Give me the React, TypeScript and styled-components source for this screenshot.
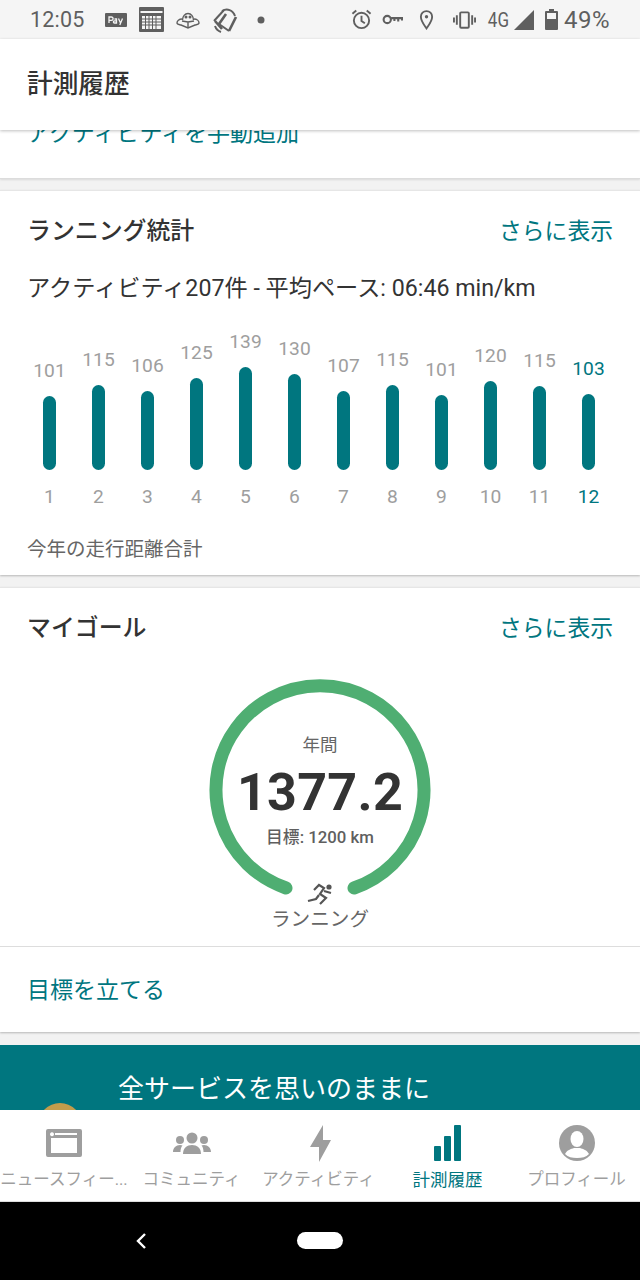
import React from "react";
import styled, { createGlobalStyle } from "styled-components";

const Global = createGlobalStyle`
  html, body { margin: 0; padding: 0; background: #f2f2f2; }
  * { box-sizing: border-box; }
  body { font-family: Roboto, "Noto Sans CJK JP", sans-serif; }
`;
const TEAL = "#00767f";
const Screen = styled.div`width:640px;height:1280px;display:flex;flex-direction:column;overflow:hidden;background:#f2f2f2;`;
const StatusBar = styled.div`height:39px;flex:none;background:#f5f5f5;display:flex;align-items:center;padding:0 30px;color:#5f5f5f;`;
const Time = styled.span`font-size:21.5px;letter-spacing:.2px;width:75px;`;
const StatusLeft = styled.div`display:flex;align-items:center;gap:12px;`;
const StatusDot = styled.svg`margin-left:7px;`;
const StatusRight = styled.div`display:flex;align-items:center;margin-left:auto;`;
const StatusGlyph = styled.svg<{ $gap: number }>`margin-left:${p => p.$gap}px;flex:none;`;
const NetLabel = styled.span`font-size:20px;transform:scaleX(.85);margin:0 3px 0 10px;`;
const Percent = styled.span`font-size:24px;letter-spacing:.5px;margin-left:6px;`;
const Header = styled.header`height:91px;flex:none;background:#fff;display:flex;align-items:center;padding:0 27px 7px;font-size:25.7px;font-weight:500;color:#333;position:relative;z-index:2;box-shadow:0 1px 3px rgba(0,0,0,.25);`;
const Scroll = styled.main`flex:1;min-height:0;overflow:hidden;position:relative;display:flex;flex-direction:column;`;
const ClippedCard = styled.div`height:49px;flex:none;background:#fff;overflow:hidden;display:flex;align-items:flex-end;padding:0 27px 28px;border-bottom:1px solid #dcdcdc;box-shadow:0 1px 2px rgba(0,0,0,.1);`;
const Link = styled.span`font-size:23px;color:${TEAL};line-height:32px;white-space:nowrap;`;
const Card = styled.section<{ $top: number }>`flex:none;background:#fff;margin-top:${p => p.$top}px;box-shadow:0 1px 2px rgba(0,0,0,.25);border-top:1px solid #e6e6e6;`;
const CardHead = styled.div`display:flex;justify-content:space-between;align-items:center;padding:18px 27px 0 27px;height:62px;`;
const CardTitle = styled.h2`margin:0;font-size:23.9px;font-weight:500;color:#333;line-height:34px;`;
const More = styled.span`font-size:22.8px;color:${TEAL};line-height:34px;padding-top:2px;`;
const Summary = styled.p`margin:19px 0 0;padding:0 27px;font-size:23.2px;line-height:32px;color:#333;white-space:nowrap;`;
const Chart = styled.div`display:grid;grid-template-columns:repeat(12,49px);padding:0 25px;margin-top:16px;`;
const Col = styled.div`display:flex;flex-direction:column;align-items:center;`;
const BarArea = styled.div`height:150px;display:flex;flex-direction:column;justify-content:flex-end;align-items:center;width:100%;`;
const Value = styled.span<{ $on: boolean }>`font-size:19.2px;line-height:24px;margin-bottom:13px;color:${p => (p.$on ? TEAL : "#9e9e9e")};`;
const Bar = styled.div<{ $h: number }>`width:13px;height:${p => p.$h}px;border-radius:7px;background:${TEAL};`;
const Month = styled.span<{ $on: boolean }>`font-size:19.2px;line-height:24px;margin-top:15px;color:${p => (p.$on ? TEAL : "#9e9e9e")};`;
const Caption = styled.p`margin:27px 0 0;padding:0 27px 11px;font-size:19.5px;line-height:28px;color:#666;`;
const Gauge = styled.div`margin:20px auto 0;width:240px;height:276px;position:relative;display:flex;flex-direction:column;align-items:center;`;
const GaugeRing = styled.svg`position:absolute;left:0;top:0;`;
const Period = styled.span`font-size:17.5px;color:#666;margin-top:62px;line-height:26px;z-index:1;`;
const Big = styled.span`font-size:52px;font-weight:700;color:#333;line-height:60px;letter-spacing:.3px;z-index:1;margin-top:5px;`;
const Goal = styled.span`font-size:16.8px;font-weight:500;color:#5f5f5f;line-height:24px;z-index:1;margin-top:2px;`;
const RunIcon = styled.svg`position:absolute;left:106px;top:212px;`;
const Sport = styled.span`position:absolute;top:236px;left:0;right:0;text-align:center;font-size:19.6px;color:#666;line-height:28px;`;
const Footer = styled.div`border-top:1px solid #ddd;height:86px;display:flex;align-items:center;padding:2px 27px 0;`;
const Promo = styled.div`margin-top:13px;flex:1;background:${TEAL};position:relative;overflow:hidden;padding:27px 0 0 118px;color:#fff;font-size:26px;line-height:34px;`;
const Avatar = styled.div`position:absolute;left:38px;top:58px;width:44px;height:44px;border-radius:50%;background:#c39c4b;`;
const Nav = styled.nav`height:92px;flex:none;background:#fff;display:flex;position:relative;z-index:2;border-bottom:1px solid #ddd;`;
const NavItem = styled.div<{ $w: number; $on?: boolean }>`width:${p => p.$w}px;flex:none;display:flex;flex-direction:column;align-items:center;color:${p => (p.$on ? TEAL : "#9e9e9e")};font-size:${p => (p.$on ? 17.5 : 16.5)}px;overflow:hidden;`;
const NavIcon = styled.div`height:58px;padding-top:8px;display:flex;align-items:center;justify-content:center;`;
const NavLabel = styled.span`line-height:24px;white-space:nowrap;`;
const SystemBar = styled.div`height:78px;flex:none;background:#000;display:flex;align-items:center;justify-content:center;position:relative;`;
const BackBtn = styled.svg`position:absolute;left:134px;top:30px;`;
const HomePill = styled.div`width:46px;height:17px;border-radius:9px;background:#fff;margin-top:-2px;`;

const data = [
  [101, 74], [115, 85], [106, 79], [125, 92], [139, 103], [130, 96],
  [107, 79], [115, 85], [101, 75], [120, 89], [115, 84], [103, 76],
];

export default function App() {
  return (
    <Screen>
      <Global />
      <StatusBar>
        <Time>12:05</Time>
        <StatusLeft>
          <svg width="22" height="14" viewBox="0 0 22 14"><rect width="22" height="14" rx="1" fill="#5f5f5f" /><g fill="none" stroke="#f5f5f5" strokeWidth="1.3"><path d="M4 10V4h2.400a1.500 1.500 0 0 1 0 3.400H4" /><path d="M9.500 6h2v4h-2a1 1 0 0 1 0-2.200h2" /><path d="M13.500 5.500l2 4.500m2-4.500L14.800 12" /></g></svg>
          <svg width="25" height="25" viewBox="0 0 25 25"><rect width="25" height="25" rx="1" fill="#5f5f5f" /><rect x="1.500" y="4" width="22" height="2" fill="#f5f5f5" /><rect x="3" y="9" width="19" height="13" fill="#f5f5f5" /><g stroke="#5f5f5f" strokeWidth="1"><path d="M3 12h19M3 15h19M3 18h19M6.500 9v13M10 9v13M13.500 9v13M17 9v13" /></g></svg>
          <svg width="24" height="18" viewBox="0 0 24 18" fill="none" stroke="#5f5f5f" strokeWidth="1.400"><path d="M6.500 9a5.500 6.500 0 0 1 11 0" /><path d="M6 8C3 8 1 10 1 12c0 1.500 2 1.500 4 2l7 3 7-3c2-.5 4-.5 4-2 0-2-2-4-5-4" /><path d="M12 11v6M6 10l6 1 6-1" /><circle cx="10" cy="6" r=".8" fill="#5f5f5f" /><circle cx="14" cy="6" r=".8" fill="#5f5f5f" /></svg>
          <svg width="26" height="26" viewBox="0 0 26 26" fill="none" stroke="#5f5f5f" strokeWidth="2"><path d="M2 14L12 3" /><path d="M10 4c5-3 11-1 13 5" /><path d="M24 10L17 24" strokeWidth="2.600" /><path d="M17 24L7 17" /><path d="M3 14l7 8M7 17l7-10" strokeWidth="2.600" /><path d="M3 19c1 3 3 5 6 6" /></svg>
          <StatusDot width="8" height="8" viewBox="0 0 8 8"><circle cx="4" cy="4" r="3.500" fill="#5f5f5f" /></StatusDot>
        </StatusLeft>
        <StatusRight>
          <StatusGlyph $gap={0} width="21" height="21" viewBox="0 0 22 22" fill="none" stroke="#5f5f5f" strokeWidth="2"><circle cx="11" cy="12" r="8" /><path d="M11 7v5.500l3.500 2.500M1.500 5L5.500 1.500M20.500 5L16.500 1.500" /></StatusGlyph>
          <StatusGlyph $gap={10} width="21" height="12" viewBox="0 0 22 12" fill="none" stroke="#5f5f5f" strokeWidth="2.200"><circle cx="5.500" cy="5.500" r="3.800" /><path d="M9.500 4h11.500v2.500M17 4v3.500M13 4v3" /></StatusGlyph>
          <StatusGlyph $gap={16} width="15" height="21" viewBox="0 0 16 22" fill="none" stroke="#5f5f5f" strokeWidth="2"><path d="M8 20.500C4.500 15.500 2 12.500 2 8a6 6 0 0 1 12 0c0 4.500-2.500 7.500-6 12.500z" /><circle cx="8" cy="8" r="1.800" fill="#5f5f5f" stroke="none" /></StatusGlyph>
          <StatusGlyph $gap={19} width="23" height="18" viewBox="0 0 24 18" fill="none" stroke="#5f5f5f" strokeWidth="2"><rect x="7.500" y="1" width="9" height="16" rx="1" /><path d="M4 4v10M20 4v10M1 6.500v5M23 6.500v5" /></StatusGlyph>
          <NetLabel>4G</NetLabel>
          <svg width="20" height="20" viewBox="0 0 20 20"><path d="M20 0v20H0z" fill="#5f5f5f" /></svg>
          <StatusGlyph $gap={11} width="13" height="21" viewBox="0 0 13 21"><path d="M4 0h5v2h3a1 1 0 0 1 1 1v17a1 1 0 0 1-1 1H1a1 1 0 0 1-1-1V3a1 1 0 0 1 1-1h3z" fill="#5f5f5f" /><rect x="2" y="4" width="9" height="6" fill="#f5f5f5" /></StatusGlyph>
          <Percent>49%</Percent>
        </StatusRight>
      </StatusBar>
      <Header>計測履歴</Header>
      <Scroll>
        <ClippedCard><Link>アクティビティを手動追加</Link></ClippedCard>
        <Card $top={11}>
          <CardHead><CardTitle>ランニング統計</CardTitle><More>さらに表示</More></CardHead>
          <Summary>アクティビティ207件 - 平均ペース: 06:46 min/km</Summary>
          <Chart>
            {data.map(([v, h], i) => (
              <Col key={i}>
                <BarArea>
                  <Value $on={i === 11}>{v}</Value>
                  <Bar $h={h} />
                </BarArea>
                <Month $on={i === 11}>{i + 1}</Month>
              </Col>
            ))}
          </Chart>
          <Caption>今年の走行距離合計</Caption>
        </Card>
        <Card $top={12}>
          <CardHead><CardTitle>マイゴール</CardTitle><More>さらに表示</More></CardHead>
          <Gauge>
            <GaugeRing width="240" height="240" viewBox="0 0 240 240">
              <path d="M 86 218 A 104 104 0 1 1 154 218" fill="none" stroke="#4fae72" strokeWidth="13" strokeLinecap="round" />
            </GaugeRing>
            <Period>年間</Period>
            <Big>1377.2</Big>
            <Goal>目標: 1200 km</Goal>
            <RunIcon width="28" height="24" viewBox="0 0 28 24" fill="none" stroke="#555" strokeWidth="2.200">
              <circle cx="23" cy="5" r="2.600" fill="#555" stroke="none" />
              <path d="M8 8l5-5 5 3-4 6 6 4-6 6" />
              <path d="M18 9l7 2M13 13l-3 4-8 2" />
            </RunIcon>
            <Sport>ランニング</Sport>
          </Gauge>
          <Footer><Link>目標を立てる</Link></Footer>
        </Card>
        <Promo>全サービスを思いのままに<Avatar /></Promo>
      </Scroll>
      <Nav>
        <NavItem $w={128}>
          <NavIcon><svg width="36" height="28" viewBox="0 0 36 28"><path fillRule="evenodd" d="M2 0h32a2 2 0 0 1 2 2v24a2 2 0 0 1-2 2H2a2 2 0 0 1-2-2V2a2 2 0 0 1 2-2zM5 9v15h26V9zM9 4v2h22V4zM6 3.200a2 2 0 1 0 .01 0z" fill="currentColor" /></svg></NavIcon>
          <NavLabel>ニュースフィー...</NavLabel>
        </NavItem>
        <NavItem $w={127}>
          <NavIcon><svg width="38" height="22" viewBox="0 0 38 22" fill="currentColor"><circle cx="19" cy="6" r="5.500" /><path d="M10 22c0-6 4-9 9-9s9 3 9 9z" /><circle cx="7" cy="8" r="4" /><path d="M0 20c0-4 3-7 7-7 1 0 2 .2 2.500.5C8 15 7.500 18 7.500 20z" /><circle cx="31" cy="8" r="4" /><path d="M38 20c0-4-3-7-7-7-1 0-2 .2-2.500.5C30 15 30.500 18 30.500 20z" /></svg></NavIcon>
          <NavLabel>コミュニティ</NavLabel>
        </NavItem>
        <NavItem $w={127}>
          <NavIcon><svg width="25" height="37" viewBox="-4 0 25 37" fill="currentColor"><path d="M13 0v15h8L9 37V22H0z" /></svg></NavIcon>
          <NavLabel>アクティビティ</NavLabel>
        </NavItem>
        <NavItem $w={131} $on>
          <NavIcon><svg width="27" height="36" viewBox="0 0 27 36" fill="currentColor"><rect y="21" width="7" height="15" rx="1" /><rect x="10" y="11" width="7" height="25" rx="1" /><rect x="20" width="7" height="36" rx="1" /></svg></NavIcon>
          <NavLabel>計測履歴</NavLabel>
        </NavItem>
        <NavItem $w={127}>
          <NavIcon><svg width="36" height="36" viewBox="0 0 36 36"><circle cx="18" cy="18" r="18" fill="currentColor" /><ellipse cx="18" cy="14" rx="6.500" ry="8" fill="#fff" /><path d="M6 29c2-4 6-5 9-6h6c3 1 7 2 9 6-3 3-7 4-12 4s-9-1-12-4z" fill="#fff" /></svg></NavIcon>
          <NavLabel>プロフィール</NavLabel>
        </NavItem>
      </Nav>
      <SystemBar>
        <BackBtn width="13" height="18" viewBox="0 0 13 18" fill="none" stroke="#fff" strokeWidth="2.400"><path d="M11 2L4 9l7 7" /></BackBtn>
        <HomePill />
      </SystemBar>
    </Screen>
  );
}
